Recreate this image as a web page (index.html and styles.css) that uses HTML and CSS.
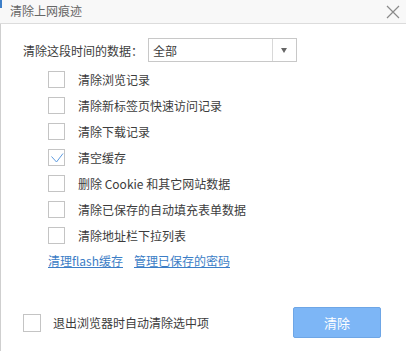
FILE: index.html
```
<!DOCTYPE html>
<html>
<head>
	<title>清除上网痕迹</title>
	<meta charset="utf-8">
	<link rel="stylesheet" href="styles.css">
</head>
<body>
	<div class="dialog">
		<div class="titlebar">
			<span class="title">清除上网痕迹</span>
			<svg class="close" width="14" height="14" viewBox="0 0 14 14">
				<path d="M1 1 L13 13 M13 1 L1 13" stroke="#8a8a8a" stroke-width="1.2" fill="none"/>
			</svg>
		</div>
		<div class="content">
			<div class="range">
				<span class="label">清除这段时间的数据：</span>
				<div class="select">
					<span class="value">全部</span>
					<span class="arrow"></span>
				</div>
			</div>
			<ul class="options">
				<li><span class="box"></span>清除浏览记录</li>
				<li><span class="box"></span>清除新标签页快速访问记录</li>
				<li><span class="box"></span>清除下载记录</li>
				<li><span class="box">
					<svg width="17" height="17" viewBox="0 0 17 17"><path d="M3.5 7.5 L8.5 13 L15 4.5" stroke="#5d9be0" stroke-width="1" fill="none"/></svg>
				</span>清空缓存</li>
				<li><span class="box"></span>删除 Cookie 和其它网站数据</li>
				<li><span class="box"></span>清除已保存的自动填充表单数据</li>
				<li><span class="box"></span>清除地址栏下拉列表</li>
			</ul>
			<div class="links">
				<a href="#">清理flash缓存</a>
				<a href="#">管理已保存的密码</a>
			</div>
			<div class="footer">
				<label class="auto"><span class="box"></span>退出浏览器时自动清除选中项</label>
				<button class="clear">清除</button>
			</div>
		</div>
	</div>
</body>
</html>
```
FILE: styles.css
```
* {
	box-sizing: border-box;
}

body {
	margin: 0px;
	padding: 0px;
	font-family: "Noto Sans CJK SC", "Liberation Sans", sans-serif;
	font-size: 12px;
	color: #3c3c3c;
	background: white;
}

.dialog {
	width: 406px;
	height: 351px;
	display: flex;
	flex-direction: column;
	position: relative;
}

.dialog:before {
	content: "";
	position: absolute;
	left: 0px;
	top: 0px;
	width: 2px;
	height: 8px;
	background: #3d7fc8;
}

.titlebar {
	height: 24px;
	background: #f8f8f8;
	border-bottom: 1px solid #dcdcdc;
	display: flex;
	align-items: center;
	justify-content: space-between;
	padding: 0px 6px 2px 10px;
}

.title {
	font-size: 12px;
	color: #666;
}

.close {
	margin-top: 2px;
}

.content {
	flex: 1;
	border-left: 1px solid #cfcfcf;
	padding: 14px 0px 0px 22px;
	display: flex;
	flex-direction: column;
}

.range {
	display: flex;
	align-items: center;
	height: 24px;
}

.label {
	width: 125px;
}

.select {
	width: 149px;
	height: 24px;
	border: 1px solid #c8c8c8;
	display: flex;
	align-items: center;
}

.value {
	flex: 1;
	padding-left: 4px;
}

.arrow {
	width: 24px;
	height: 22px;
	border-left: 1px solid #d8d8d8;
	position: relative;
}

.arrow:after {
	content: "";
	position: absolute;
	left: 8px;
	top: 9px;
	border-left: 3.5px solid transparent;
	border-right: 3.5px solid transparent;
	border-top: 5px solid #666;
}

.options {
	list-style: none;
	margin: 4px 0px 0px 25px;
	padding: 0px;
}

.options li {
	height: 26px;
	display: flex;
	align-items: center;
}

.box {
	width: 17px;
	height: 17px;
	border: 1px solid #c4c4c4;
	background: white;
	margin-right: 13px;
	display: inline-block;
	position: relative;
	flex: none;
}

.box svg {
	position: absolute;
	left: -1px;
	top: -1px;
}

.links {
	margin: 4px 0px 0px 25px;
	display: flex;
	gap: 11px;
}

.links a {
	color: #3b7dc6;
	text-decoration: underline;
}

.footer {
	margin-top: auto;
	margin-bottom: 13px;
	display: flex;
	align-items: center;
	justify-content: space-between;
	padding-right: 25px;
}

.auto {
	display: flex;
	align-items: center;
}

.auto .box {
	width: 18px;
	height: 18px;
	margin-right: 12px;
}

.clear {
	width: 88px;
	height: 31px;
	background: #7db6f6;
	border: 1px solid #6ea6e6;
	border-radius: 2px;
	color: white;
	font-family: "Noto Sans CJK SC", sans-serif;
	font-size: 13px;
	cursor: pointer;
}
```
